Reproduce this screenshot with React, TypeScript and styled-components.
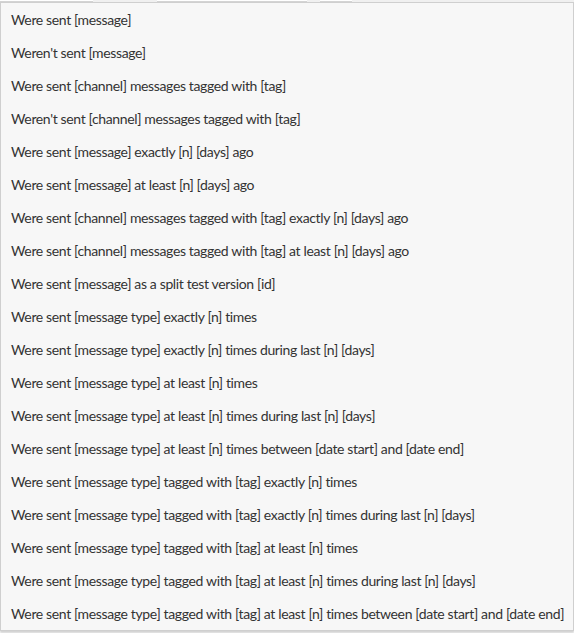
import styled, { createGlobalStyle } from 'styled-components'

const GlobalStyle = createGlobalStyle`
	body {
		margin: 0;
		background: #ffffff;
		font-family: Lato, 'Open Sans', sans-serif;
	}
`

const Page = styled.div`
	width: 574px;
	height: 633px;
	display: flex;
	flex-direction: column;
	overflow: hidden;
`

// bottoms of the controls sitting above the dropdown
const TopStrip = styled.div`
	height: 2px;
	display: flex;
	background: #f0f0f0;
`

const TabBottom = styled.div<{ $w: number; $gap: number }>`
	width: ${p => p.$w}px;
	margin-left: ${p => p.$gap}px;
	background: #ffffff;
	border-bottom: 1px solid #d4d4d4;
	box-sizing: border-box;
`

const Menu = styled.ul`
	list-style: none;
	margin: 0;
	padding: 0;
	background: #f7f7f7;
	border: 1px solid #cfcfcf;
	box-shadow: 0 2px 2px rgba(0, 0, 0, 0.18);
	width: 574px;
	box-sizing: border-box;
`

const Item = styled.li`
	height: 33px;
	display: flex;
	align-items: center;
	padding-left: 10px;
	font-size: 14px;
	color: #333333;
	letter-spacing: -0.36px;
	white-space: nowrap;
	cursor: pointer;
`

const options = [
	'Were sent [message]',
	"Weren't sent [message]",
	'Were sent [channel] messages tagged with [tag]',
	"Weren't sent [channel] messages tagged with [tag]",
	'Were sent [message] exactly [n] [days] ago',
	'Were sent [message] at least [n] [days] ago',
	'Were sent [channel] messages tagged with [tag] exactly [n] [days] ago',
	'Were sent [channel] messages tagged with [tag] at least [n] [days] ago',
	'Were sent [message] as a split test version [id]',
	'Were sent [message type] exactly [n] times',
	'Were sent [message type] exactly [n] times during last [n] [days]',
	'Were sent [message type] at least [n] times',
	'Were sent [message type] at least [n] times during last [n] [days]',
	'Were sent [message type] at least [n] times between [date start] and [date end]',
	'Were sent [message type] tagged with [tag] exactly [n] times',
	'Were sent [message type] tagged with [tag] exactly [n] times during last [n] [days]',
	'Were sent [message type] tagged with [tag] at least [n] times',
	'Were sent [message type] tagged with [tag] at least [n] times during last [n] [days]',
	'Were sent [message type] tagged with [tag] at least [n] times between [date start] and [date end]',
]

const App = () => {
	return (
		<Page>
			<GlobalStyle />
			<TopStrip>
				<TabBottom $w={93} $gap={0} />
				<TabBottom $w={150} $gap={64} />
				<TabBottom $w={32} $gap={13} />
			</TopStrip>
			<Menu>
				{options.map(o => (
					<Item key={o}>{o}</Item>
				))}
			</Menu>
		</Page>
	)
}

export default App
